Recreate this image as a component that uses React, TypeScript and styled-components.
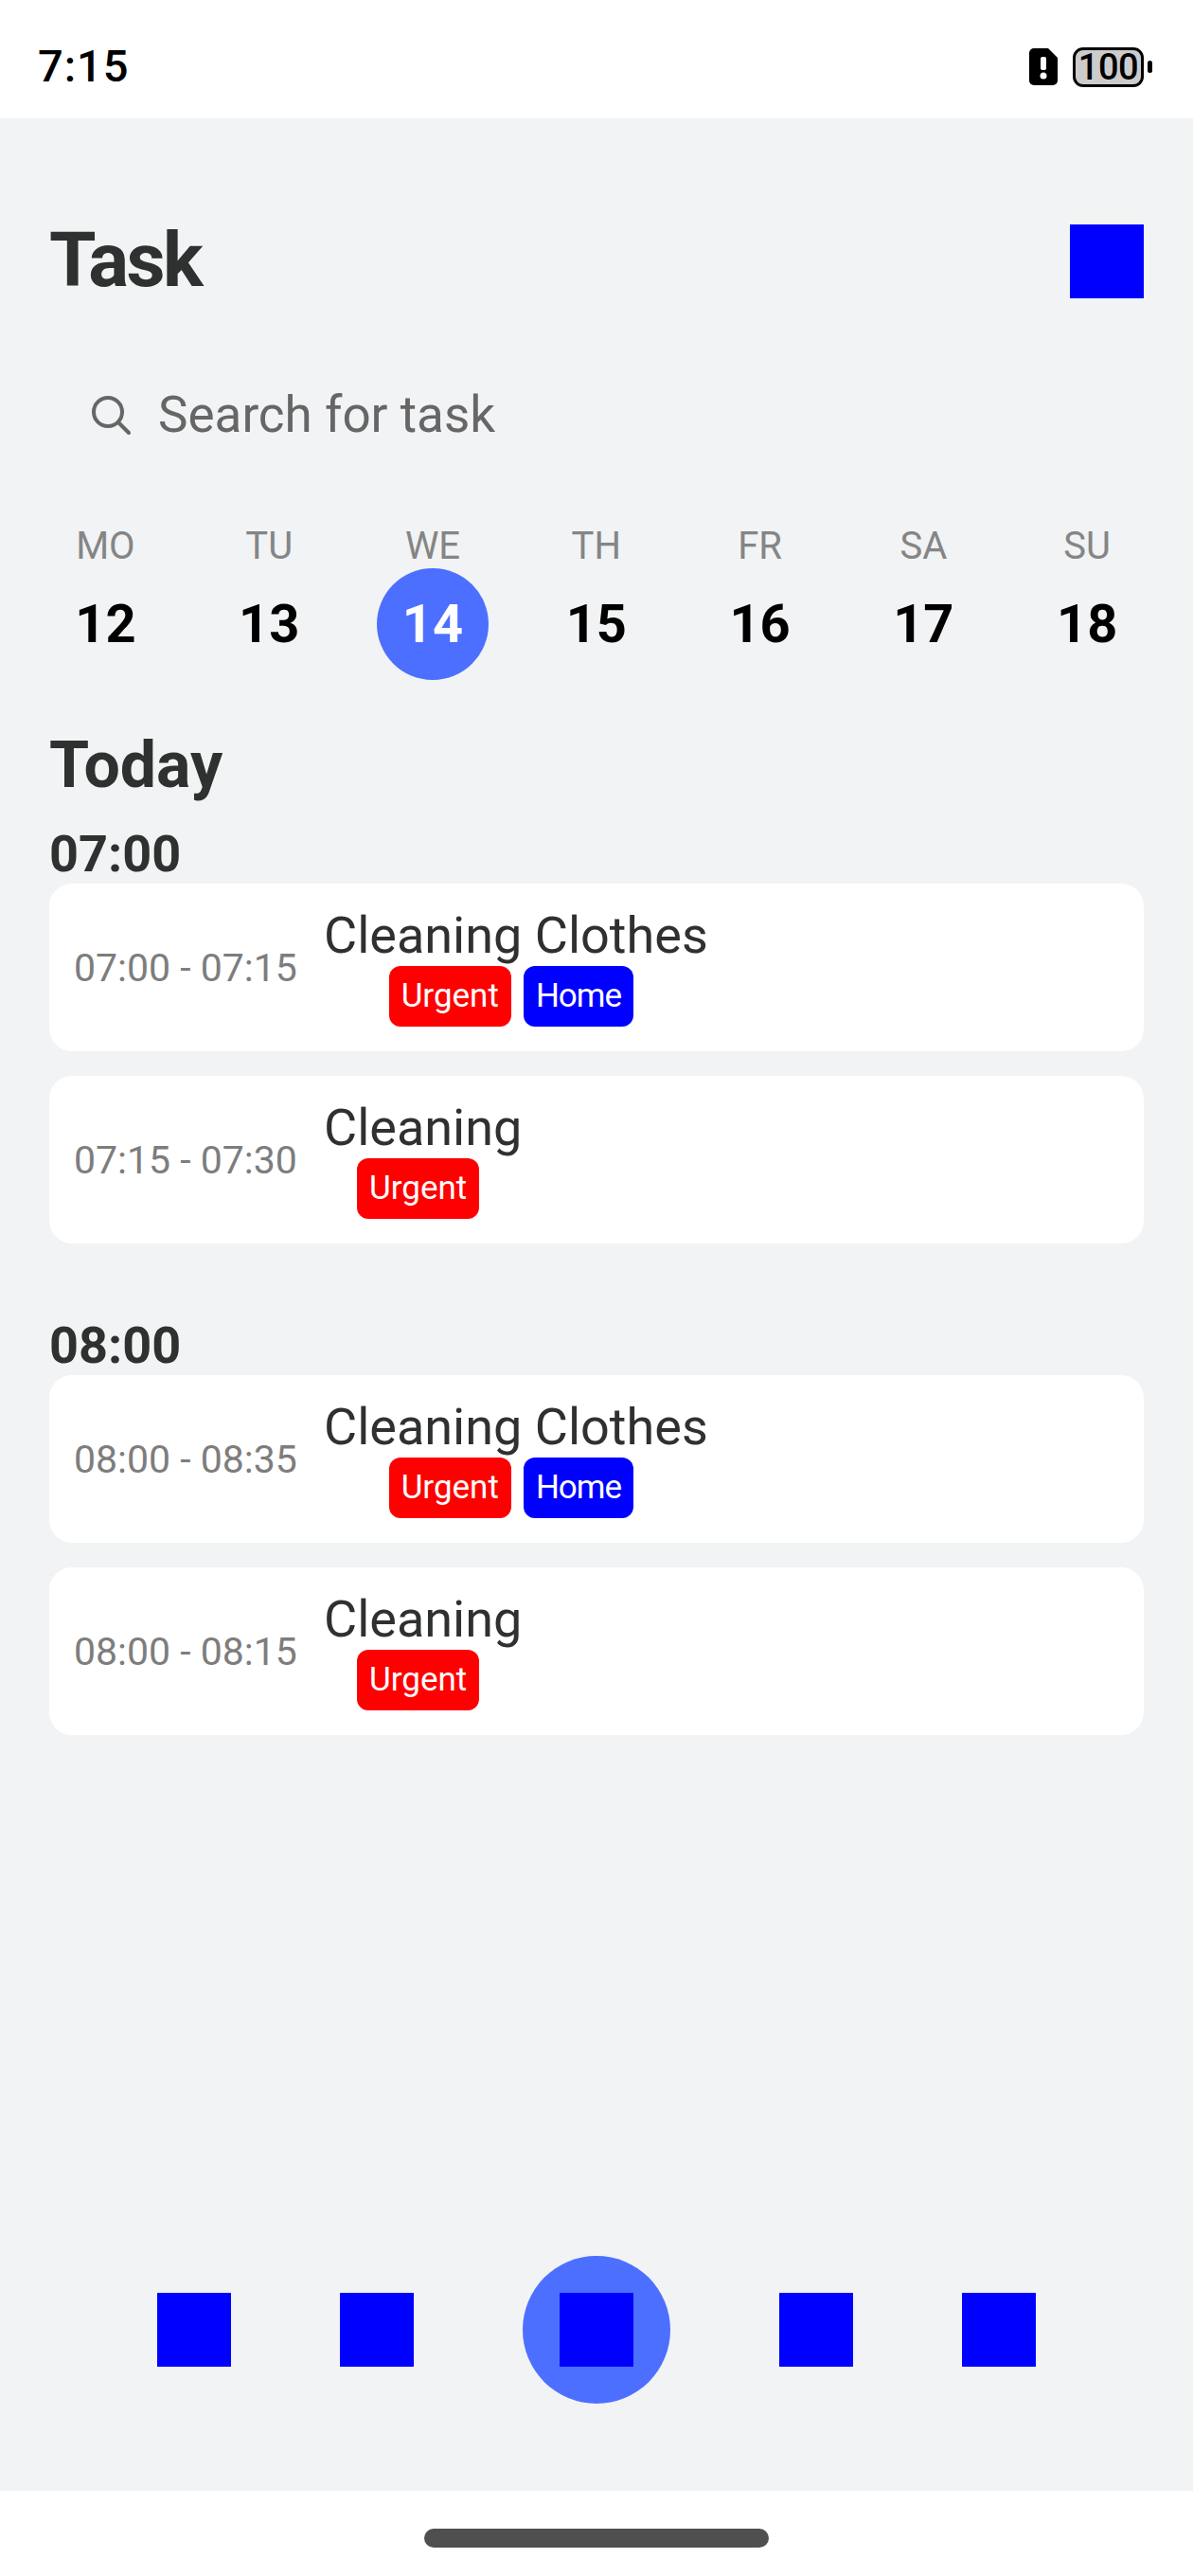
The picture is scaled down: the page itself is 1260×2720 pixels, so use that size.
import React from 'react';
import styled, { createGlobalStyle } from 'styled-components';

const Global = createGlobalStyle`
  html, body { margin: 0; padding: 0; background: #fff; }
  * { box-sizing: border-box; }
`;
const Screen = styled.div`
  width: 1260px; height: 2720px; display: flex; flex-direction: column;
  font-family: "Roboto", "Liberation Sans", sans-serif; background: #f1f3f5; color: #2f3131;
`;
const StatusBar = styled.div`
  height: 125px; flex: none; background: #fff; display: flex; align-items: center; justify-content: space-between;
  padding: 14px 43px 0 40px;
`;
const Clock = styled.span`font-size: 47px; font-weight: 500; color: #000; letter-spacing: 1px;`;
const StatusIcons = styled.div`display: flex; align-items: center; gap: 16px; margin-top: 2px; padding-right: 9px;`;
const Battery = styled.div`
  width: 75px; height: 42px; border: 3px solid #000; border-radius: 11px; background: #ccc;
  display: flex; align-items: center; justify-content: center;
  font-size: 38px; font-weight: 500; color: #000; position: relative; letter-spacing: -0.5px;
  &::after { content: ""; position: absolute; right: -12px; top: 11px; width: 5px; height: 13px; background: #000; border-radius: 3px; }
`;
const Main = styled.div`flex: 1; padding: 0 52px; display: flex; flex-direction: column;`;
const Header = styled.div`display: flex; justify-content: space-between; align-items: center; margin-top: 112px;`;
const Title = styled.h1`margin: -3px 0 0; font-size: 80px; font-weight: 700; letter-spacing: -2.5px; line-height: 78px;`;
const Square = styled.div`width: 78px; height: 78px; background: #0000ff; flex: none;`;
const Search = styled.div`display: flex; align-items: center; gap: 28px; margin: 93px 0 0 43px; height: 60px; font-size: 53px; color: #666; font-weight: 400;`;
const Week = styled.div`display: grid; grid-template-columns: repeat(7, 172.8px); margin: 87px 0 0 -27px;`;
const Day = styled.div`display: flex; flex-direction: column; align-items: center;`;
const DayName = styled.span`font-size: 40px; color: #858585; line-height: 44px;`;
const DayNum = styled.div<{ $active?: boolean }>`
  width: 118px; height: 118px; border-radius: 50%; margin-top: 1px; display: flex; align-items: center; justify-content: center;
  font-size: 56px; font-weight: 700; color: ${p => (p.$active ? '#fff' : '#000')}; background: ${p => (p.$active ? '#4d6fff' : 'transparent')};
`;
const Today = styled.h2`margin: 52px 0 0; font-size: 68px; font-weight: 700; line-height: 76px;`;
const Hour = styled.h3<{ $gap?: number }>`margin: ${p => p.$gap ?? 25}px 0 0; font-size: 54px; font-weight: 700; line-height: 62px;`;
const Card = styled.div`
  height: 177px; margin-bottom: 26px; background: #fff; border-radius: 24px; padding: 0 26px; display: flex; align-items: center; gap: 26px;
`;
const Range = styled.span`font-size: 41px; color: #7d7d7d; white-space: nowrap; width: 238px;`;
const CardBody = styled.div`display: flex; flex-direction: column; align-items: center; margin-top: -2px;`;
const CardTitle = styled.span`font-size: 54px; color: #2f3131; line-height: 60px; white-space: nowrap;`;
const Tags = styled.div`display: flex; gap: 13px; margin: 2px 10px 0 0;`;
const Tag = styled.span<{ $bg: string; $tight?: boolean }>`
  background: ${p => p.$bg}; color: #fff; border-radius: 12px; height: 64px; padding: 0 13px; display: flex; align-items: center; font-size: 35px;
  letter-spacing: ${p => (p.$tight ? '-1px' : '0')};
`;
const Nav = styled.div`margin-top: auto; margin-bottom: 92px; display: flex; align-items: center; justify-content: center;`;
const NavItem = styled.div`width: 78px; height: 78px; background: #0000ff; flex: none;`;
const NavCenter = styled.div`
  width: 156px; height: 156px; border-radius: 50%; background: #4d6fff; display: flex; align-items: center; justify-content: center; margin: 0 115px;
`;
const NavGap = styled.div`width: 115px; flex: none;`;
const HomeBar = styled.div`height: 90px; flex: none; background: #fff; display: flex; justify-content: center; padding-top: 40px;`;
const Handle = styled.div`width: 364px; height: 20px; border-radius: 10px; background: #4f4f4f;`;

const days = [['MO', 12], ['TU', 13], ['WE', 14], ['TH', 15], ['FR', 16], ['SA', 17], ['SU', 18]] as const;
const TaskCard = ({ range, title, home }: { range: string; title: string; home?: boolean }) => (
  <Card>
    <Range>{range}</Range>
    <CardBody>
      <CardTitle>{title}</CardTitle>
      <Tags>
        <Tag $bg="#ff0000">Urgent</Tag>
        {home && <Tag $bg="#0000ff" $tight>Home</Tag>}
      </Tags>
    </CardBody>
  </Card>
);

export default function App() {
  return (
    <Screen>
      <Global />
      <StatusBar>
        <Clock>7:15</Clock>
        <StatusIcons>
          <svg width="30" height="39" viewBox="0 0 30 39">
            <path d="M5 0h15l10 10v24a5 5 0 0 1-5 5H5a5 5 0 0 1-5-5V5a5 5 0 0 1 5-5z" fill="#000" />
            <rect x="12" y="9" width="6" height="14" rx="2" fill="#fff" />
            <circle cx="15" cy="29" r="3.5" fill="#fff" />
          </svg>
          <Battery>100</Battery>
        </StatusIcons>
      </StatusBar>
      <Main>
        <Header>
          <Title>Task</Title>
          <Square />
        </Header>
        <Search>
          <svg width="44" height="44" viewBox="0 0 44 44" fill="none" stroke="#666" strokeWidth="4" strokeLinecap="round">
            <circle cx="19" cy="19" r="15" />
            <path d="M30 30l11 11" />
          </svg>
          <span>Search for task</span>
        </Search>
        <Week>
          {days.map(([n, d]) => (
            <Day key={n}>
              <DayName>{n}</DayName>
              <DayNum $active={d === 14}>{d}</DayNum>
            </Day>
          ))}
        </Week>
        <Today>Today</Today>
        <Hour>07:00</Hour>
        <TaskCard range="07:00 - 07:15" title="Cleaning Clothes" home />
        <TaskCard range="07:15 - 07:30" title="Cleaning" />
        <Hour $gap={51}>08:00</Hour>
        <TaskCard range="08:00 - 08:35" title="Cleaning Clothes" home />
        <TaskCard range="08:00 - 08:15" title="Cleaning" />
        <Nav>
          <NavItem /><NavGap /><NavItem />
          <NavCenter><NavItem /></NavCenter>
          <NavItem /><NavGap /><NavItem />
        </Nav>
      </Main>
      <HomeBar><Handle /></HomeBar>
    </Screen>
  );
}
